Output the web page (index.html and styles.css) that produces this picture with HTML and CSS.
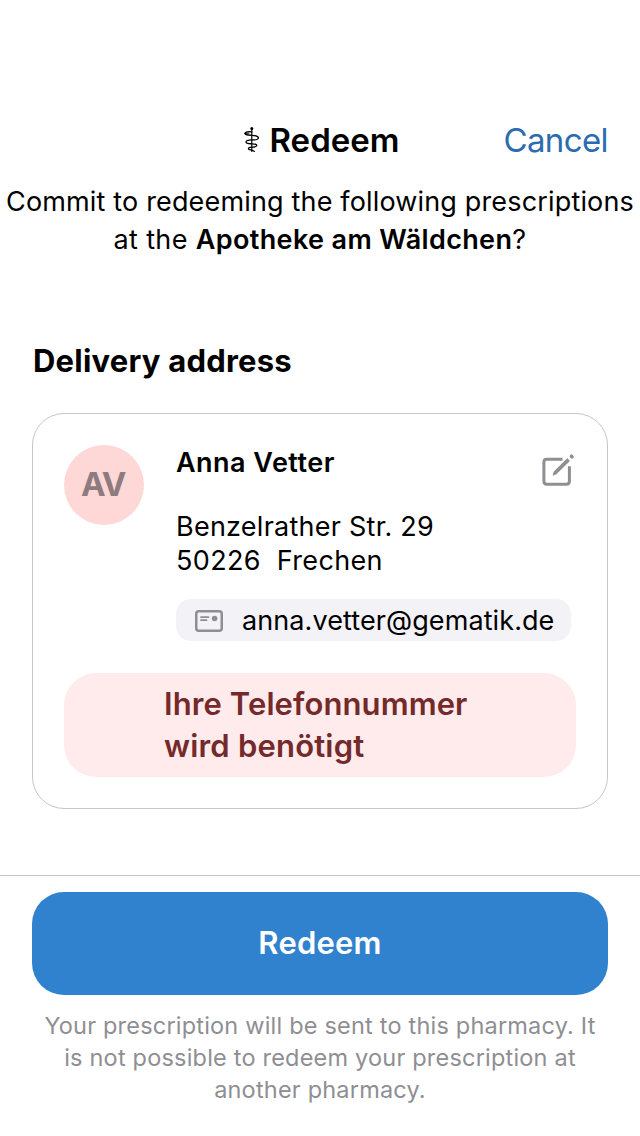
FILE: index.html
```html
<!DOCTYPE html>
<html lang="en">
<head>
<meta charset="utf-8">
<title>Redeem</title>
<link rel="stylesheet" href="styles.css">
</head>
<body>
<main class="screen">
  <header class="nav">
    <h1 class="nav-title">
      <svg class="staff" width="16" height="28" viewBox="0 0 16 28" fill="none" stroke="#000" stroke-width="1.2" stroke-linecap="round">
        <circle cx="7.800" cy="2.400" r="1.500" fill="#000" stroke="none"/>
        <path d="M7.800 3v22.500"/>
        <path d="M7.800 5.800C4.500 5.400 1.500 6 1 7.400C.8 8.800 3.500 9 7.800 9.300C11.500 9.600 14.500 10.300 14.400 12C14 14.200 10.500 13.800 7.800 13.900C4.500 14 2 14.300 2 16C2 17.800 5 17.700 7.800 17.800C10.500 17.900 12.800 18 12.800 19.500C12.600 21 10 21 7.800 21.200C5.800 21.400 4.300 21.800 4.500 23C4.900 24.200 8.500 23.500 10.300 25.400" stroke-width="1.350"/>
        <path d="M1 7.400L5 7"/>
      </svg>
      <span class="title-text">Redeem</span>
    </h1>
    <a class="cancel">Cancel</a>
  </header>
  <p class="intro"><span class="intro-a">Commit to redeeming the following prescriptions</span><br><span class="intro-b">at the <b>Apotheke am Wäldchen</b>?</span></p>
  <h2 class="heading">Delivery address</h2>
  <section class="card">
    <div class="person">
      <div class="avatar">AV</div>
      <div class="details">
        <div class="name">Anna Vetter</div>
        <div class="address"><span class="street">Benzelrather Str. 29</span><br><span class="city">50226&nbsp; Frechen</span></div>
        <div class="chip">
          <svg width="28" height="22" viewBox="0 0 28 22" fill="none" stroke="#8e8e93" stroke-width="2.500">
            <rect x="1.250" y="1.250" width="25.500" height="19.500" rx="2.500"/>
            <path d="M6 7.200h7.500M6 10.200h5.500" stroke-width="1.700" stroke-linecap="round"/>
            <circle cx="19.600" cy="8.500" r="2.800" fill="#8e8e93" stroke="none"/>
          </svg>
          <span class="email">anna.vetter@gematik.de</span>
        </div>
      </div>
      <svg class="edit" width="36" height="36" viewBox="0 0 36 36" fill="none" stroke="#8e8e93">
        <path d="M23.500 6.300H7.800Q4.900 6.300 4.900 9.200V28.300Q4.900 31.200 7.800 31.200H27.500Q30.400 31.200 30.400 28.300V13.200" stroke-width="3"/>
        <path d="M28.200 5.600L30.500 7.900L17.300 20.900L14 22.200L15.200 18.600Z" fill="#8e8e93" stroke-width=".8" stroke-linejoin="round"/>
        <path d="M32.400 3.200L33 3.800" stroke-width="3.500" stroke-linecap="round"/>
      </svg>
    </div>
    <div class="warning"><div class="warning-text">Ihre Telefonnummer<br><span class="warning-end">wird benötigt</span></div></div>
  </section>
  <footer class="footer">
    <button class="redeem">Redeem</button>
    <p class="caption">Your prescription will be sent to this pharmacy. It<br>is not possible to redeem your prescription at<br>another pharmacy.</p>
  </footer>
</main>
</body>
</html>
```
FILE: styles.css
```css
* { box-sizing: border-box; }
body { margin: 0; background: #fff; color: #000; font-family: Inter, "Liberation Sans", sans-serif; }
h1, h2, p { margin: 0; }
.screen { width: 640px; height: 1136px; padding-top: 120px; display: flex; flex-direction: column; overflow: hidden; }
.nav { display: grid; grid-template-columns: 1fr auto 1fr; align-items: center; height: 40px; padding: 0 32px; line-height: 40px; white-space: nowrap; }
.nav-title { grid-column: 2; display: flex; align-items: center; gap: 10px; padding-left: 3px; font-size: 33px; font-weight: 600; }
.cancel { justify-self: end; font-size: 33px; letter-spacing: -.6px; color: #2b6cb0; }
.intro { margin-top: 23px; font-size: 27px; line-height: 38px; text-align: center; white-space: nowrap; }
.intro-a { letter-spacing: .16px; }
.intro-b { letter-spacing: .36px; }
.intro b { font-weight: 600; }
.heading { margin: 82px 0 0 33px; font-size: 31px; font-weight: 700; line-height: 40px; letter-spacing: .22px; }
.card { margin: 32px 32px 0; height: 396px; padding: 31px; border: 1px solid #c6c6c8; border-radius: 32px; }
.person { display: flex; }
.avatar { flex: none; width: 80px; height: 80px; padding-right: 2px; border-radius: 50%; background: #fed7d7; color: #8e7b80; font-size: 33px; font-weight: 700; line-height: 79px; letter-spacing: -1.3px; text-align: center; }
.details { width: 395px; margin-left: 32px; padding-top: 1px; font-size: 27px; line-height: 34px; white-space: nowrap; }
.name { font-weight: 600; letter-spacing: .47px; }
.address { margin-top: 30px; letter-spacing: .25px; }
.city { letter-spacing: .35px; }
.chip { display: flex; align-items: center; gap: 19px; height: 42px; margin-top: 21px; padding: 0 0 0 19px; border-radius: 15px; background: #f2f2f7; }
.chip svg { flex: none; margin-top: 2px; }
.email { padding-top: 2px; letter-spacing: .09px; }
.edit { flex: none; margin: 8px -4px 0 -32px; }
.warning { height: 104px; margin-top: 32px; padding: 10px 0 0 100px; border-radius: 32px; background: #ffebeb; color: #742a2a; font-size: 31px; font-weight: 600; line-height: 42px; letter-spacing: .1px; }
.warning-end { letter-spacing: .2px; }
.footer { margin-top: 66px; padding: 16px 32px 0; border-top: 1px solid #c6c6c8; }
.redeem { display: block; width: 100%; height: 103px; padding: 0 0 2px; border: 0; border-radius: 32px; background: #3182ce; color: #fff; font: 600 31px/101px Inter, "Liberation Sans", sans-serif; letter-spacing: .2px; }
.caption { margin-top: 15px; font-size: 23.500px; line-height: 32px; letter-spacing: .2px; color: #8e8e93; text-align: center; white-space: nowrap; }
```
